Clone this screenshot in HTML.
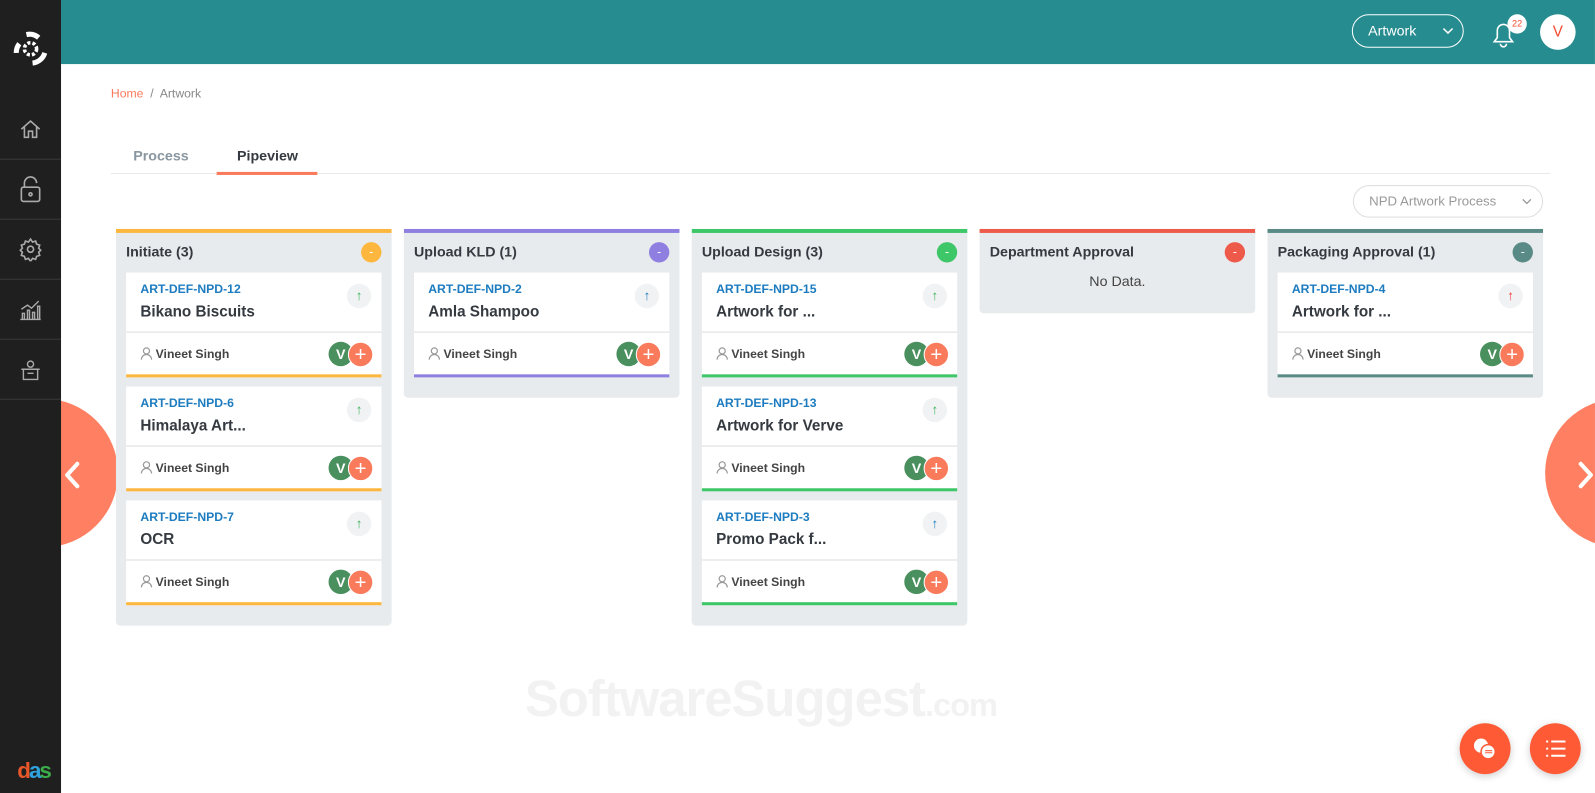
<!DOCTYPE html>
<html><head><meta charset="utf-8"><style>
*{box-sizing:border-box;margin:0;padding:0}
html,body{width:1595px;height:793px;overflow:hidden}
body{font-family:"Liberation Sans",Arial,sans-serif;background:#fff;position:relative}
#w{position:absolute;left:0;top:0;width:1568px;height:780px;transform:scale(1.0172);transform-origin:0 0;overflow:hidden}
.side{position:absolute;left:0;top:0;width:60px;height:780px;background:#1f1f1f;z-index:3}
.side .it{position:absolute;left:0;width:60px;height:59px;border-bottom:1px solid #3a3a3a;display:flex;align-items:center;justify-content:center}
.top{position:absolute;left:60px;top:0;right:0;height:63px;background:#268c90}
.sel{position:absolute;left:1329px;top:14px;width:110px;height:33px;border:1px solid #fff;border-radius:17px;color:#fff;font-size:14px;line-height:31px;padding-left:15px}
.av{position:absolute;left:1514px;top:14px;width:35px;height:35px;border-radius:50%;background:#fff;color:#f24a2f;text-align:center;line-height:35px;font-size:15px}
.badge{position:absolute;left:1482px;top:14px;width:19px;height:19px;border-radius:50%;background:#fff;color:#f24a2f;font-size:9px;text-align:center;line-height:19px}
.bc{position:absolute;left:109px;top:85px;font-size:12px;color:#888}
.bc span{color:#fa7a5c}
.tabs{position:absolute;left:109px;top:170px;width:1415px;border-top:1px solid #e8e8e8}
.tab{position:absolute;top:145px;font-size:14px;font-weight:bold}
.npd{position:absolute;left:1330px;top:182px;width:187px;height:32px;border:1px solid #ddd;border-radius:16px;font-size:13px;color:#999;line-height:30px;padding-left:15px}
.col{position:absolute;top:225px;width:271px;background:#e8ebee;border-top:4px solid;border-radius:0 0 4px 4px;padding:0 10px 20px}
.col h3{font-size:14px;color:#343a40;height:39px;line-height:36px;font-weight:bold;position:relative}
.dot{position:absolute;right:0;top:9px;width:20px;height:20px;border-radius:50%;color:#fff;font-size:12px;text-align:center;line-height:19px;font-weight:normal}
.card{background:#fff;height:103px;margin-bottom:9px;border-bottom:3px solid;position:relative}
.card .id{position:absolute;left:14px;top:9px;font-size:12px;font-weight:bold;color:#1d7cc0}
.card .nm{position:absolute;left:14px;top:30px;font-size:15px;font-weight:bold;color:#343a40}
.card .ar{position:absolute;right:10px;top:11px;width:24px;height:24px;border-radius:50%;background:#f0f2f3;font-size:13px;text-align:center;line-height:24px;font-weight:bold}
.card .ft{position:absolute;left:0;right:0;top:58px;border-top:1px solid #ddd;height:42px}
.card .us{position:absolute;left:14px;top:14px;font-size:12px;font-weight:bold;color:#444}
.card .us svg{vertical-align:-2px;margin-right:3px}
.v{position:absolute;right:28px;top:9px;width:24px;height:24px;border-radius:50%;background:#4a8f5e;color:#fff;font-size:14px;font-weight:bold;line-height:24px;text-align:center}
.pl{position:absolute;right:8px;top:9px;width:25px;height:25px;border-radius:50%;background:#fa7a5c;color:#fff;font-size:20px;line-height:24px;text-align:center;border:1px solid #fff}
.circ{position:absolute;width:146px;height:146px;border-radius:50%;background:#fe7f61;top:392px}
.fab{position:absolute;top:711px;width:50px;height:50px;border-radius:50%;background:#fe5a35;box-shadow:0 2px 8px rgba(0,0,0,.2)}
.wm{position:absolute;left:516px;top:658px;font-size:50px;font-weight:bold;color:#f2f2f2;letter-spacing:-1px}
</style></head><body><div id="w">
<div class="side">
<div style="position:absolute;left:12px;top:30px;width:36px;height:36px"><svg width="36" height="36" viewBox="0 0 36 36"><circle cx="18" cy="18" r="6" fill="none" stroke="#fff" stroke-width="3.5" stroke-dasharray="3 2"/><path d="M4 22a14 14 0 0 1 3-9" stroke="#fff" stroke-width="5" fill="none"/><path d="M14 4a14 14 0 0 1 12 3" stroke="#fff" stroke-width="5" fill="none"/><path d="M32 22a14 14 0 0 1-12 10" stroke="#fff" stroke-width="5" fill="none"/></svg></div>
<div class="it" style="top:98px"><svg width="24" height="24" viewBox="0 0 24 24" fill="none" stroke="#aaa" stroke-width="1.6"><path d="M3 12l9-8 9 8M6 10v10h4v-6h4v6h4V10"/></svg></div>
<div class="it" style="top:157px"><svg width="24" height="28" viewBox="0 0 24 28" fill="none" stroke="#aaa" stroke-width="1.6"><path d="M6 12V8a6 6 0 0 1 12 0"/><rect x="3" y="12" width="18" height="14" rx="2"/><circle cx="12" cy="19" r="1.5"/></svg></div>
<div class="it" style="top:216px"><svg width="24" height="24" viewBox="0 0 24 24" fill="none" stroke="#aaa" stroke-width="1.6"><circle cx="12" cy="12" r="3"/><path d="M12 2l2 3 3-1 1 3 3 1-1 3 2 2-2 2 1 3-3 1-1 3-3-1-2 3-2-3-3 1-1-3-3-1 1-3-2-2 2-2-1-3 3-1 1-3 3 1z"/></svg></div>
<div class="it" style="top:275px"><svg width="24" height="24" viewBox="0 0 24 24" fill="none" stroke="#aaa" stroke-width="1.4"><path d="M2 22h20M4 22v-6h2v6M9 22v-9h2v9M14 22v-7h2v7M19 22V9h2v13M3 12l6-4 4 3 7-7"/></svg></div>
<div class="it" style="top:334px"><svg width="24" height="24" viewBox="0 0 24 24" fill="none" stroke="#aaa" stroke-width="1.4"><circle cx="12" cy="7" r="3"/><path d="M3 12h18M5 12v10h14V12M9 16h6"/></svg></div>
<div style="position:absolute;left:17px;top:745px;font-size:22px;font-weight:bold;letter-spacing:-2px"><span style="color:#e8572a">d</span><span style="color:#2fa3e0">a</span><span style="color:#3cae49">s</span></div>
</div>
<div class="circ" style="left:-30px"></div>
<svg style="position:absolute;left:60px;top:452px;z-index:4" width="24" height="30" viewBox="0 0 24 30"><path d="M16 4L6 15l10 11" fill="none" stroke="#fff" stroke-width="4" stroke-linecap="round" stroke-linejoin="round"/></svg>
<div class="circ" style="left:1519px"></div>
<svg style="position:absolute;left:1548px;top:452px" width="24" height="30" viewBox="0 0 24 30"><path d="M6 4l10 11L6 26" fill="none" stroke="#fff" stroke-width="4" stroke-linecap="round" stroke-linejoin="round"/></svg>
<div class="top"></div>
<div class="sel">Artwork<svg style="position:absolute;right:9px;top:12px" width="11" height="7" viewBox="0 0 11 7"><path d="M1 1l4.5 4.5L10 1" fill="none" stroke="#fff" stroke-width="1.5"/></svg></div>
<svg style="position:absolute;left:1465px;top:19px" width="26" height="28" viewBox="0 0 26 28" fill="none" stroke="#fff" stroke-width="1.6"><path d="M4 22h18l-3-4V11a6 6 0 0 0-12 0v7zM10 24a3 3 0 0 0 6 0"/></svg>
<div class="badge">22</div>
<div class="av">V</div>
<div class="bc"><span>Home</span> &nbsp;/&nbsp; Artwork</div>
<div class="tab" style="left:131px;color:#8a97a0">Process</div>
<div class="tab" style="left:233px;color:#343a40">Pipeview</div>
<div class="tabs"></div>
<div style="position:absolute;left:213px;top:169px;width:99px;height:3px;background:#fa7a5c"></div>
<div class="npd">NPD Artwork Process<svg style="position:absolute;right:10px;top:12px" width="10" height="6" viewBox="0 0 10 6"><path d="M1 1l4 4 4-4" fill="none" stroke="#999" stroke-width="1.3"/></svg></div>

<div class="col" style="left:114px;border-color:#fdb73e"><h3>Initiate (3)<span class="dot" style="background:#fdb73e">-</span></h3>
<div class="card" style="border-color:#fdb73e"><div class="id">ART-DEF-NPD-12</div><div class="nm">Bikano Biscuits</div><div class="ar" style="color:#3cb55a">↑</div><div class="ft"><div class="us"><svg width="12" height="13" viewBox="0 0 12 13" fill="none" stroke="#999" stroke-width="1.2"><circle cx="6" cy="4" r="3"/><path d="M1 12.5a5 5 0 0 1 10 0"/></svg>Vineet Singh</div><div class="v">V</div><div class="pl">+</div></div></div>
<div class="card" style="border-color:#fdb73e"><div class="id">ART-DEF-NPD-6</div><div class="nm">Himalaya Art...</div><div class="ar" style="color:#3cb55a">↑</div><div class="ft"><div class="us"><svg width="12" height="13" viewBox="0 0 12 13" fill="none" stroke="#999" stroke-width="1.2"><circle cx="6" cy="4" r="3"/><path d="M1 12.5a5 5 0 0 1 10 0"/></svg>Vineet Singh</div><div class="v">V</div><div class="pl">+</div></div></div>
<div class="card" style="border-color:#fdb73e;margin-bottom:0"><div class="id">ART-DEF-NPD-7</div><div class="nm">OCR</div><div class="ar" style="color:#3cb55a">↑</div><div class="ft"><div class="us"><svg width="12" height="13" viewBox="0 0 12 13" fill="none" stroke="#999" stroke-width="1.2"><circle cx="6" cy="4" r="3"/><path d="M1 12.5a5 5 0 0 1 10 0"/></svg>Vineet Singh</div><div class="v">V</div><div class="pl">+</div></div></div>
</div>

<div class="col" style="left:397px;border-color:#8f7fe0"><h3>Upload KLD (1)<span class="dot" style="background:#8f7fe0">-</span></h3>
<div class="card" style="border-color:#8f7fe0;margin-bottom:0"><div class="id">ART-DEF-NPD-2</div><div class="nm">Amla Shampoo</div><div class="ar" style="color:#1d7cc0">↑</div><div class="ft"><div class="us"><svg width="12" height="13" viewBox="0 0 12 13" fill="none" stroke="#999" stroke-width="1.2"><circle cx="6" cy="4" r="3"/><path d="M1 12.5a5 5 0 0 1 10 0"/></svg>Vineet Singh</div><div class="v">V</div><div class="pl">+</div></div></div>
</div>

<div class="col" style="left:680px;border-color:#3ec769"><h3>Upload Design (3)<span class="dot" style="background:#3ec769">-</span></h3>
<div class="card" style="border-color:#3ec769"><div class="id">ART-DEF-NPD-15</div><div class="nm">Artwork for ...</div><div class="ar" style="color:#3cb55a">↑</div><div class="ft"><div class="us"><svg width="12" height="13" viewBox="0 0 12 13" fill="none" stroke="#999" stroke-width="1.2"><circle cx="6" cy="4" r="3"/><path d="M1 12.5a5 5 0 0 1 10 0"/></svg>Vineet Singh</div><div class="v">V</div><div class="pl">+</div></div></div>
<div class="card" style="border-color:#3ec769"><div class="id">ART-DEF-NPD-13</div><div class="nm">Artwork for Verve</div><div class="ar" style="color:#3cb55a">↑</div><div class="ft"><div class="us"><svg width="12" height="13" viewBox="0 0 12 13" fill="none" stroke="#999" stroke-width="1.2"><circle cx="6" cy="4" r="3"/><path d="M1 12.5a5 5 0 0 1 10 0"/></svg>Vineet Singh</div><div class="v">V</div><div class="pl">+</div></div></div>
<div class="card" style="border-color:#3ec769;margin-bottom:0"><div class="id">ART-DEF-NPD-3</div><div class="nm">Promo Pack f...</div><div class="ar" style="color:#1d7cc0">↑</div><div class="ft"><div class="us"><svg width="12" height="13" viewBox="0 0 12 13" fill="none" stroke="#999" stroke-width="1.2"><circle cx="6" cy="4" r="3"/><path d="M1 12.5a5 5 0 0 1 10 0"/></svg>Vineet Singh</div><div class="v">V</div><div class="pl">+</div></div></div>
</div>

<div class="col" style="left:963px;border-color:#ee5a4a;height:83px"><h3>Department Approval<span class="dot" style="background:#ee5a4a">-</span></h3>
<div style="text-align:center;font-size:14px;color:#444">No Data.</div></div>

<div class="col" style="left:1246px;border-color:#5a8a86"><h3>Packaging Approval (1)<span class="dot" style="background:#5a8a86">-</span></h3>
<div class="card" style="border-color:#5a8a86;margin-bottom:0"><div class="id">ART-DEF-NPD-4</div><div class="nm">Artwork for ...</div><div class="ar" style="color:#ee3b3b">↑</div><div class="ft"><div class="us"><svg width="12" height="13" viewBox="0 0 12 13" fill="none" stroke="#999" stroke-width="1.2"><circle cx="6" cy="4" r="3"/><path d="M1 12.5a5 5 0 0 1 10 0"/></svg>Vineet Singh</div><div class="v">V</div><div class="pl">+</div></div></div>
</div>

<div class="wm">SoftwareSuggest<span style="font-size:32px">.com</span></div>
<div class="fab" style="left:1435px"><svg width="50" height="50" viewBox="0 0 50 50" fill="#fff"><circle cx="21" cy="22" r="7"/><circle cx="28" cy="28" r="7" stroke="#fe5a35" stroke-width="1.5"/><path d="M25 27h7M25 29h7" stroke="#fe5a35"/></svg></div>
<div class="fab" style="left:1504px"><svg width="50" height="50" viewBox="0 0 50 50" stroke="#fff" stroke-width="2"><path d="M16 18h2M21 18h14M16 25h2M21 25h14M16 32h2M21 32h14"/></svg></div>
</div></body></html>
